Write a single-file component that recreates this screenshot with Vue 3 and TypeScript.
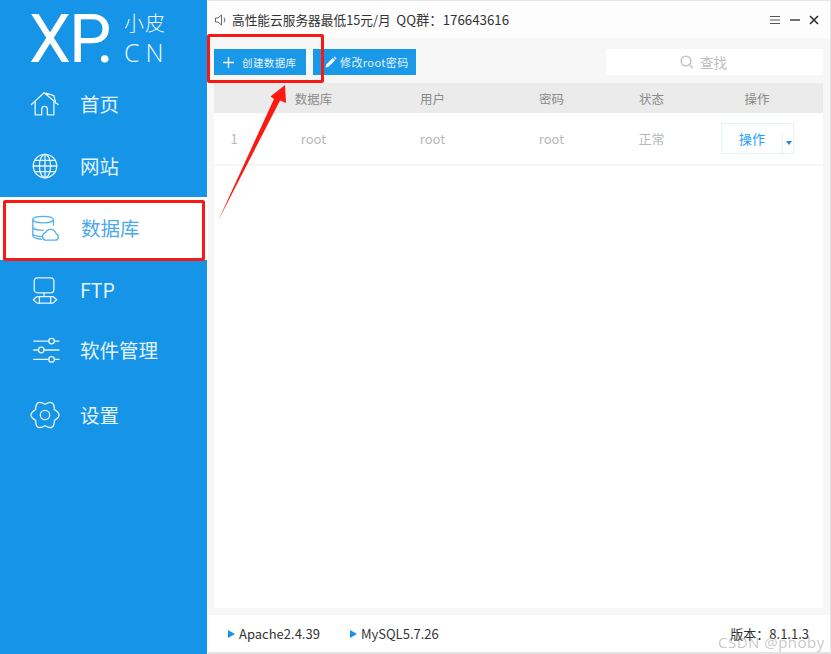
<script setup lang="ts">
const nav = [
  { label: '首页', icon: 'home', cls: 'h62' },
  { label: '网站', icon: 'globe', cls: 'h62' },
  { label: '数据库', icon: 'db', cls: 'active' },
  { label: 'FTP', icon: 'ftp', cls: 'h59' },
  { label: '软件管理', icon: 'sliders', cls: 'h62' },
  { label: '设置', icon: 'gear', cls: 'h68' },
]
const cols = ['', '数据库', '用户', '密码', '状态', '操作']
</script>

<template>
  <div class="win">
    <aside class="side">
      <div class="logo">
        <span class="xp">X<span class="p">P</span>.</span>
        <div class="logo-r"><span class="xiao">小皮</span><span class="cn">CN</span></div>
      </div>
      <nav class="nav">
        <div v-for="n in nav" :key="n.label" class="item" :class="n.cls">
          <svg class="ic" viewBox="0 0 32 32" fill="none" stroke="currentColor" stroke-width="1.4" stroke-linejoin="round" stroke-linecap="round">
            <template v-if="n.icon === 'home'">
              <path d="M1.500 16.500 15 4l15 12.500M17 4.500l8.500 2.500 2 8" />
              <path d="M5.500 14v13.500h7v-6a3 3 0 0 1 6 0v6h7V14" />
            </template>
            <template v-else-if="n.icon === 'globe'">
              <circle cx="16" cy="16" r="12.500" />
              <ellipse cx="16" cy="16" rx="6" ry="12.500" />
              <path d="M16 3.500v25M3.500 16h25M5 10h22M5 22h22" />
            </template>
            <template v-else-if="n.icon === 'db'">
              <path d="M3 7c0-2 5-3.500 11-3.500S25 5 25 7s-5 3.500-11 3.500S3 9 3 7Z" />
              <path d="M3 7v17c0 2 4 3.500 9 4M25 7v6M3 15c0 2 5 3.500 11 3.500M3 22c0 1.500 4 3 9 3" />
              <path d="M16 29h11a3.500 3.500 0 0 0 .8-6.800 6 6 0 0 0-11.300-1.200 4.200 4.200 0 0 0-.5 8Z" />
            </template>
            <template v-else-if="n.icon === 'ftp'">
              <rect x="4.500" y="3" width="21" height="16" rx="3.500" />
              <path d="M15 19v4" />
              <path d="M3.500 26.500 7.500 23h17l4 3.500-4 3.500h-17Z" />
              <path d="M10 23v7M22 23v7" />
            </template>
            <template v-else-if="n.icon === 'sliders'">
              <path d="M4 6.500h16M26 6.500h5M4 16h5M15 16h16M4 26h16M26 26h5" />
              <circle cx="23" cy="6.500" r="3" /><circle cx="12" cy="16" r="3" /><circle cx="23" cy="26" r="3" />
            </template>
            <template v-else>
              <path d="M16 4.500Q26-1.300 26 10.250 36 16 26 21.750 26 33.300 16 27.500 6 33.300 6 21.750-4 16 6 10.250 6-1.300 16 4.500Z" />
              <circle cx="16" cy="16" r="5" />
            </template>
          </svg>
          <span class="lbl">{{ n.label }}</span>
        </div>
      </nav>
    </aside>

    <main class="main">
      <header class="title">
        <svg class="spk" viewBox="0 0 14 14" fill="none" stroke="#666" stroke-width="1"><path d="M1.500 5h2.500l3.500-3v10l-3.500-3H1.500ZM10 4.500c1 1.500 1 3.500 0 5" /></svg>
        <span class="notice">高性能云服务器最低15元/月&nbsp;&nbsp;<span class="qq">QQ群：176643616</span></span>
        <span class="ctl">
          <svg width="12" height="10" viewBox="0 0 12 10" stroke="#555"><path d="M1 1.500h10M1 5h10M1 8.500h10" /></svg>
          <svg width="12" height="10" viewBox="0 0 12 10" stroke="#444" stroke-width="1.500"><path d="M1 5h10" /></svg>
          <svg width="10" height="10" viewBox="0 0 10 10" stroke="#333" stroke-width="1.700"><path d="M1 1l8 8M9 1 1 9" /></svg>
        </span>
      </header>

      <section class="panel">
        <div class="tools">
          <button class="btn b1">
            <svg width="11" height="11" viewBox="0 0 11 11" stroke="#fff" stroke-width="1.300"><path d="M5.500 0v11M0 5.500h11" /></svg>
            <span>创建数据库</span>
          </button>
          <button class="btn b2">
            <svg width="12" height="12" viewBox="0 0 12 12" fill="#fff"><path d="M0.500 11.500 1.300 8.500 7.800 2l2.200 2.200-6.500 6.500ZM8.600 1.200l.9-.8 2.100 2.100-.8.900Z" /></svg>
            <span>修改root密码</span>
          </button>
          <div class="search">
            <svg width="14" height="14" viewBox="0 0 14 14" fill="none" stroke="#c4c4c4" stroke-width="1.500"><circle cx="6" cy="6" r="4.800" /><path d="m9.500 9.500 3.500 3.500" /></svg>
            <span>查找</span>
          </div>
        </div>
        <div class="tbl">
          <div class="row head"><span v-for="c in cols" :key="c">{{ c }}</span></div>
          <div class="row body">
            <span>1</span><span>root</span><span>root</span><span>root</span><span>正常</span>
            <span>
              <div class="op"><span class="op-t">操作</span><span class="op-c"><i class="caret"></i></span></div>
            </span>
          </div>
        </div>
      </section>

      <footer class="foot">
        <span class="svc"><i class="tri"></i>Apache2.4.39</span>
        <span class="svc s2"><i class="tri"></i>MySQL5.7.26</span>
        <span class="ver">版本：8.1.1.3</span>
      </footer>
    </main>

    <div class="mark m1"></div>
    <div class="mark m2"></div>
    <svg class="arrow" width="831" height="654" viewBox="0 0 831 654">
      <path d="M218 221 274 99 270.500 96.500 285 85 286 103 280 100.500Z" fill="#fa1a12" />
    </svg>
    <span class="wm">CSDN @phoby</span>
  </div>
</template>

<style>
html, body { margin: 0; background: #fff; }
</style>

<style scoped>
.win {
  position: relative; width: 831px; height: 654px; overflow: hidden; display: flex;
  font-family: "Noto Sans CJK SC", "Noto Sans", sans-serif; background: #fff;
}
.side { width: 207px; flex: none; background: #1594e8; color: #e6f4fd; }
.logo { height: 73px; display: flex; align-items: flex-start; padding-left: 29px; box-sizing: border-box; }
.xp {
  font-family: Roboto, sans-serif; font-weight: 400; font-size: 67px; line-height: 78px; color: #fff;
  letter-spacing: -2px; display: block; height: 73px;
}
.p { letter-spacing: -15px; }
.logo-r { display: flex; flex-direction: column; margin-left: 12px; padding-top: 9px; color: #f0f8fe; }
.xiao { font-size: 20px; line-height: 27px; font-weight: 300; letter-spacing: 1px; }
.cn { font-family: "Open Sans", sans-serif; font-size: 25px; line-height: 33px; letter-spacing: 6px; font-weight: 300; }
.item { display: flex; align-items: center; height: 62px; padding-left: 30px; box-sizing: border-box; }
.h59 { height: 59px; }
.h68 { height: 68px; }
.ic { width: 30px; height: 30px; flex: none; }
.lbl { margin-left: 20px; font-size: 19.500px; line-height: 24px; }
.active { height: 63px; padding-bottom: 2px; background: #fff; color: #55b0ee; }
.active .lbl { margin-left: 21px; color: #4aa8ec; }

.main { flex: 1; min-width: 0; display: flex; flex-direction: column; border-top: 1px solid #e6e6e6; border-bottom: 2px solid #e2e2e2; margin-left: 1px; border-right: 1px solid #e6e6e6; }
.title { height: 37px; flex: none; display: flex; align-items: center; padding: 0 10px 0 6px; background: #fdfdfd; }
.spk { width: 14px; height: 14px; margin-right: 4px; }
.notice { font-size: 12.700px; color: #333; }
.qq { font-size: 13.300px; }
.ctl { margin-left: auto; display: flex; align-items: center; gap: 8px; margin-right: 1px; }
.panel { flex: 1; min-height: 0; background: #f7f7f7; padding: 11px 7px 7px 6px; display: flex; flex-direction: column; }
.tools { display: flex; height: 26px; flex: none; margin-bottom: 8px; }
.btn {
  border: 0; padding: 0; background: #1a99e9; color: #e4f3fc; height: 26px; font: inherit; font-size: 10.500px;
  display: flex; align-items: center; letter-spacing: .4px;
}
.b1 { width: 92px; padding-left: 9px; gap: 8px; }
.b2 { width: 103px; padding-left: 12px; gap: 3px; margin-left: 7px; font-size: 11px; }
.search {
  margin-left: auto; width: 217px; background: #fff; display: flex; align-items: center; justify-content: center;
  gap: 6px; color: #bdbdbd; font-size: 13.500px; padding-right: 22px; box-sizing: border-box;
}
.tbl { flex: 1; min-height: 0; background: #fff; }
.row { display: grid; grid-template-columns: 40px 119px 119px 119px 81px 130px; }
.row > span { text-align: center; }
.head { height: 30px; align-items: center; background: #ebebeb; color: #8a8a8a; font-size: 12.500px; }
.body { height: 53px; align-items: center; border-bottom: 2px solid #f6f6f6; box-sizing: border-box; color: #b5b8bc; font-size: 13px; }
.op { margin-left: 29px; width: 73px; height: 31px; box-sizing: border-box; border: 1px solid #e4f1fb; display: flex; margin-top: 0; }
.op-t { width: 60px; line-height: 29px; color: #1e9fff; font-size: 13px; }
.op-c { flex: 1; position: relative; border-left: 1px solid #e4f1fb; margin-top: 9px; }
.caret {
  position: absolute; left: 3px; top: 8px; width: 0; height: 0;
  border-left: 3.500px solid transparent; border-right: 3.500px solid transparent; border-top: 4px solid #1e88d8;
}
.foot { height: 37px; flex: none; display: flex; align-items: center; padding: 0 21px 0 20px; background: #fff; font-size: 13px; color: #333; }
.svc { display: flex; align-items: center; }
.s2 { margin-left: 30px; }
.tri {
  width: 0; height: 0; margin-right: 4px; border-left: 7px solid #1a93e6;
  border-top: 4px solid transparent; border-bottom: 4px solid transparent;
}
.ver { margin-left: auto; }
.mark { position: absolute; border: 3px solid #f51b14; border-radius: 2px; box-sizing: border-box; pointer-events: none; }
.m1 { left: 207px; top: 34px; width: 117px; height: 49px; }
.m2 { left: 3px; top: 200px; width: 202px; height: 61px; }
.arrow { position: absolute; left: 0; top: 0; pointer-events: none; }
.wm { position: absolute; left: 718px; top: 632px; font-size: 15px; line-height: 20px; color: rgba(130,130,130,.45); font-family: "Open Sans", sans-serif; letter-spacing: .5px; }
</style>
